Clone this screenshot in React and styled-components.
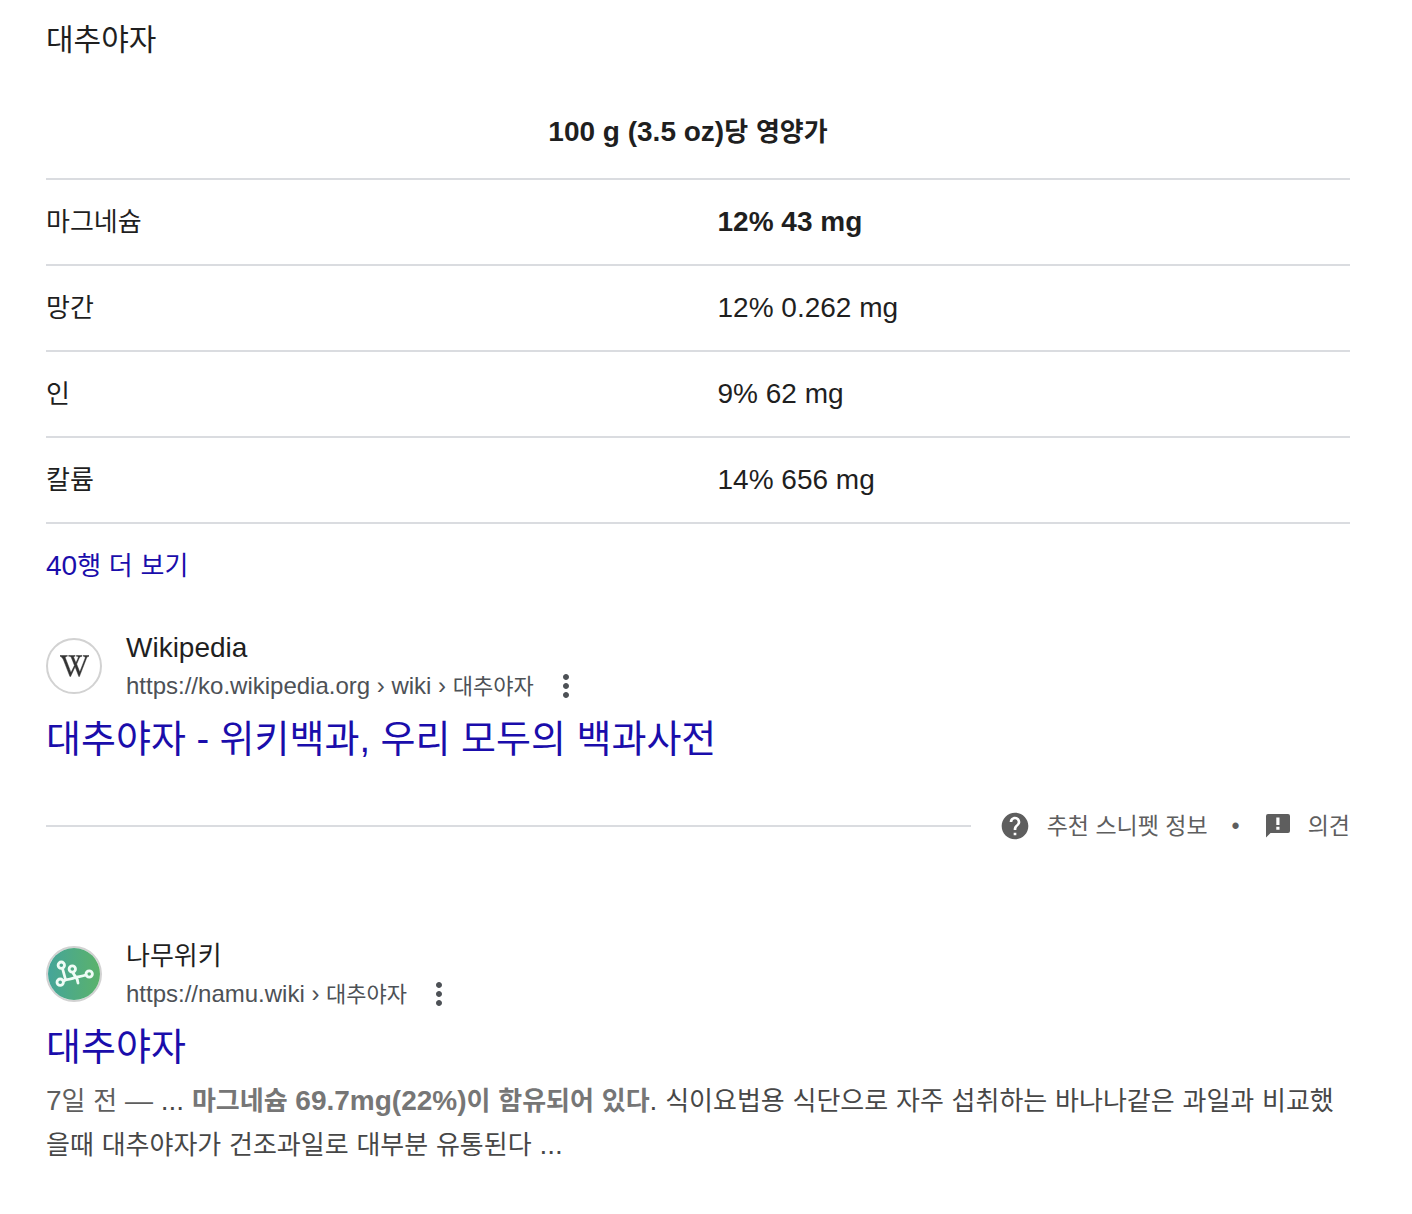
import styled, { createGlobalStyle } from "styled-components";
import { FaWikipediaW } from "react-icons/fa";
import { MdHelp, MdMoreVert } from "react-icons/md";

const nutrients = [
  { name: "마그네슘", value: "12% 43 mg", bold: true },
  { name: "망간", value: "12% 0.262 mg" },
  { name: "인", value: "9% 62 mg" },
  { name: "칼륨", value: "14% 656 mg" },
];

const NamuIcon = () => (
  <svg width='52' height='52' viewBox='0 0 52 52' aria-hidden='true'>
    <defs>
      <linearGradient id='namu'>
        <stop offset='0' stopColor='#45a599' />
        <stop offset='1' stopColor='#5bb26b' />
      </linearGradient>
    </defs>
    <circle cx='26' cy='26' r='26' fill='url(#namu)' />
    <g
      fill='none'
      stroke='#effcf6'
      strokeWidth='2.8'
      strokeLinecap='round'
      strokeLinejoin='round'
    >
      <circle cx='13.3' cy='17.2' r='3.2' />
      <circle cx='24.3' cy='21' r='3.2' />
      <circle cx='12.2' cy='34.2' r='3.2' />
      <circle cx='41.2' cy='26' r='3.2' />
      <path d='M14.5 20.5L17.5 31.5' />
      <path d='M15.5 33C20 30 23 32 27 29.5C30 28.5 34 28.5 38 27' />
      <path d='M24.8 24.3C25.5 27.5 29.5 28.5 30 35' />
    </g>
  </svg>
);

const FeedbackIcon = () => (
  <svg width='28' height='28' viewBox='0 0 28 28' aria-hidden='true'>
    <path
      fill='currentColor'
      fillRule='evenodd'
      d='M4 2h20a2 2 0 0 1 2 2v15a2 2 0 0 1-2 2H6.5L2 25.5V4a2 2 0 0 1 2-2zM12.3 5.5v7.5h3.2V5.5zM12.3 14.8v3h3.2v-3z'
    />
  </svg>
);

const Mixed = ({ text, size = 26 }) =>
  text
    .split(/([가-힣]+)/)
    .map((part, i) =>
      i % 2 ? (
        <Ko key={i} $size={size}>
          {part}
        </Ko>
      ) : (
        part
      )
    );

const Result = ({ icon, site, url, title, href, children }) => (
  <article>
    <ResultHead>
      <Favicon>{icon}</Favicon>
      <Source>
        <Site href={href}>
          <Mixed text={site} />
        </Site>
        <UrlRow>
          <cite>
            <Mixed text={url} size={22} />
          </cite>
          <MenuButton aria-label='menu'>
            <MdMoreVert size={36} />
          </MenuButton>
        </UrlRow>
      </Source>
    </ResultHead>
    <ResultTitle>
      <a href={href}>{title}</a>
    </ResultTitle>
    {children}
  </article>
);

export default function App() {
  return (
    <Page>
      <GlobalStyle />
      <Heading>대추야자</Heading>
      <Table>
        <colgroup>
          <col className='name' />
          <col />
        </colgroup>
        <thead>
          <tr>
            <th colSpan={2}>
              <Mixed text='100 g (3.5 oz)당 영양가' />
            </th>
          </tr>
        </thead>
        <tbody>
          {nutrients.map(({ name, value, bold }) => (
            <tr key={name}>
              <td>
                <Mixed text={name} />
              </td>
              <td>{bold ? <b>{value}</b> : value}</td>
            </tr>
          ))}
        </tbody>
      </Table>
      <MoreLink href='#more'>
        <Mixed text='40행 더 보기' />
      </MoreLink>

      <Result
        href='#wikipedia'
        icon={<WikipediaIcon preserveAspectRatio='none' />}
        site='Wikipedia'
        url='https://ko.wikipedia.org › wiki › 대추야자'
        title='대추야자 - 위키백과, 우리 모두의 백과사전'
      />

      <Footer>
        <hr />
        <FooterLink href='#about'>
          <MdHelp size={32} />
          추천 스니펫 정보
        </FooterLink>
        <Dot>•</Dot>
        <FooterLink href='#feedback'>
          <FeedbackIcon />
          의견
        </FooterLink>
      </Footer>

      <Result
        href='#namu'
        icon={<NamuIcon />}
        site='나무위키'
        url='https://namu.wiki › 대추야자'
        title='대추야자'
      >
        <Snippet>
          <Age>
            <Mixed text='7일 전 — ' />
          </Age>
          ...{" "}
          <b>
            <Mixed text='마그네슘 69.7mg(22%)이 함유되어 있다' />
          </b>
          <Mixed text='. 식이요법용 식단으로 자주 섭취하는 바나나같은 과일과 비교했을때 대추야자가 건조과일로 대부분 유통된다 ...' />
        </Snippet>
      </Result>
    </Page>
  );
}

const GlobalStyle = createGlobalStyle`
  * {
    box-sizing: border-box;
  }
  body {
    margin: 0;
    background: #fff;
    color: #1f1f1f;
    font-family: "Liberation Sans", "Noto Sans CJK KR", sans-serif;
    font-size: 28px;
    line-height: 44px;
  }
  a {
    color: inherit;
    text-decoration: none;
  }
`;

const Page = styled.main`
  padding: 20px 62px 48px 46px;
`;

/* hangul is set a step smaller than the latin text beside it */
const Ko = styled.span`
  font-size: ${({ $size }) => $size}px;
  line-height: 1;
`;

const Heading = styled.h2`
  margin: 0 0 50px;
  font-size: 30px;
  font-weight: 400;
  line-height: 40px;
`;

const Table = styled.table`
  width: 100%;
  table-layout: fixed;
  border-collapse: collapse;
  .name {
    width: 51.5%;
  }
  th,
  td {
    padding: 20px 20px 20px 0;
    border-bottom: 2px solid #dadce0;
    text-align: left;
  }
  th {
    padding: 0 20px 24px 0;
    text-align: center;
  }
`;

const MoreLink = styled.a`
  display: block;
  margin: 20px 0 40px;
  color: #1a0dab;
`;

const ResultHead = styled.div`
  display: flex;
  align-items: center;
  gap: 24px;
`;

const Favicon = styled.span`
  display: flex;
  align-items: center;
  justify-content: center;
  flex: none;
  width: 56px;
  height: 56px;
  border: 2px solid #d2d2d2;
  border-radius: 50%;
`;

const WikipediaIcon = styled(FaWikipediaW)`
  width: 29px;
  height: 26px;
  color: #333;
  stroke: #333;
  stroke-width: 10px;
`;

const Source = styled.div`
  display: flex;
  flex-direction: column;
`;

const Site = styled.a`
  line-height: 40px;
`;

const UrlRow = styled.div`
  display: flex;
  align-items: center;
  gap: 14px;
  color: #4d5156;
  font-size: 24px;
  line-height: 36px;
  cite {
    font-style: normal;
  }
`;

const MenuButton = styled.button`
  display: flex;
  padding: 0;
  border: none;
  background: none;
  color: inherit;
  cursor: pointer;
`;

const ResultTitle = styled.h3`
  margin: 8px 0 0;
  color: #1a0dab;
  font-size: 38px;
  font-weight: 400;
  line-height: 54px;
`;

const Footer = styled.div`
  display: flex;
  align-items: center;
  margin: 38px 0 88px;
  color: #5e5e5e;
  font-size: 23px;
  hr {
    flex: 1;
    margin: 0 28px 0 0;
    border: none;
    border-top: 2px solid #dadce0;
  }
`;

const FooterLink = styled.a`
  display: flex;
  align-items: center;
  gap: 16px;
`;

const Dot = styled.span`
  margin: 0 24px;
`;

const Snippet = styled.div`
  padding-top: 5px;
  color: #474747;
  b {
    color: #767676;
  }
`;

const Age = styled.span`
  color: #5e5e5e;
`;
